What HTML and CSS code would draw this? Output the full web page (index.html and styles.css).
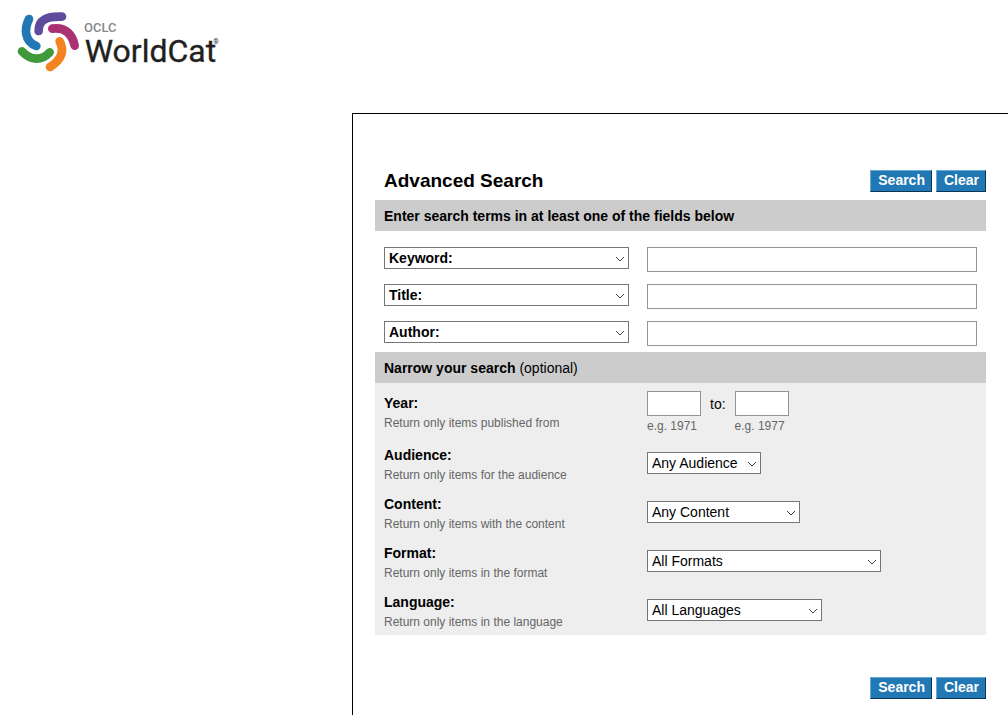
FILE: index.html
```html
<!DOCTYPE html>
<html lang="en">
<head>
<meta charset="utf-8">
<meta name="viewport" content="width=device-width, initial-scale=1">
<title>WorldCat Advanced Search</title>
<link rel="stylesheet" href="styles.css">
</head>
<body>
<header class="site-header">
  <a href="#" class="logo" aria-label="OCLC WorldCat">
    <svg width="207" height="63" viewBox="18 15 621 189" aria-hidden="true">
      <g fill="none" stroke-width="26" stroke-linecap="round">
        <path stroke="#2178b5" d="M57 42C43 70 42 109 79 123"/>
        <path stroke="#5f4b9b" d="M86 78C85 45 110 33 156 35"/>
        <path stroke="#ab3175" d="M127 71C162 67 185 82 194 122"/>
        <path stroke="#f58220" d="M149 109C163 135 158 162 120 186"/>
        <path stroke="#409a3c" d="M36 139C62 167 95 168 119 142"/>
      </g>
      <text class="logo-owner" x="222" y="82">OCLC</text>
      <text class="logo-name" x="224" y="170">WorldCat</text>
      <text class="logo-mark" x="610" y="117">®</text>
    </svg>
  </a>
</header>
<main class="content">
  <form class="search-form">
    <div class="form-head">
      <h1 class="title">Advanced Search</h1>
      <div class="actions">
        <button type="submit" class="btn">Search</button>
        <button type="reset" class="btn">Clear</button>
      </div>
    </div>
    <h2 class="bar">Enter search terms in at least one of the fields below</h2>
    <div class="terms">
      <select class="select select-index" aria-label="First index"><option>Keyword:</option><option>Title:</option><option>Author:</option></select>
      <input class="text-input" type="text" aria-label="First search term">
      <select class="select select-index" aria-label="Second index"><option>Title:</option><option>Keyword:</option><option>Author:</option></select>
      <input class="text-input" type="text" aria-label="Second search term">
      <select class="select select-index" aria-label="Third index"><option>Author:</option><option>Keyword:</option><option>Title:</option></select>
      <input class="text-input" type="text" aria-label="Third search term">
    </div>
    <h2 class="bar">Narrow your search <span class="optional">(optional)</span></h2>
    <div class="limits">
      <div class="limit limit-year">
        <div class="limit-label">
          <label for="year-from">Year:</label>
          <p class="hint">Return only items published from</p>
        </div>
        <div class="years">
          <div class="year">
            <input class="text-input" id="year-from" type="text">
            <span class="hint">e.g. 1971</span>
          </div>
          <label class="to" for="year-to">to:</label>
          <div class="year">
            <input class="text-input" id="year-to" type="text">
            <span class="hint">e.g. 1977</span>
          </div>
        </div>
      </div>
      <div class="limit">
        <div class="limit-label">
          <label for="audience">Audience:</label>
          <p class="hint">Return only items for the audience</p>
        </div>
        <select class="select select-audience" id="audience"><option>Any Audience</option></select>
      </div>
      <div class="limit">
        <div class="limit-label">
          <label for="content">Content:</label>
          <p class="hint">Return only items with the content</p>
        </div>
        <select class="select select-content" id="content"><option>Any Content</option></select>
      </div>
      <div class="limit">
        <div class="limit-label">
          <label for="format">Format:</label>
          <p class="hint">Return only items in the format</p>
        </div>
        <select class="select select-format" id="format"><option>All Formats</option></select>
      </div>
      <div class="limit">
        <div class="limit-label">
          <label for="language">Language:</label>
          <p class="hint">Return only items in the language</p>
        </div>
        <select class="select select-language" id="language"><option>All Languages</option></select>
      </div>
    </div>
    <div class="form-foot">
      <div class="actions">
        <button type="submit" class="btn">Search</button>
        <button type="reset" class="btn">Clear</button>
      </div>
    </div>
  </form>
</main>
</body>
</html>
```
FILE: styles.css
```css
* {
  box-sizing: border-box;
}

body {
  display: flex;
  flex-direction: column;
  min-height: 100vh;
  margin: 0;
  background: #fff;
  color: #000;
  font: 14px/20px "Liberation Sans", Arial, sans-serif;
}

h1,
h2,
p {
  margin: 0;
}

.site-header {
  padding: 10px 16px 40px;
}

.logo,
.logo svg {
  display: block;
}

.logo {
  width: max-content;
}

.logo text {
  font-family: Roboto, "Open Sans", sans-serif;
}

.logo-owner {
  fill: #85878a;
  font-size: 39px;
  font-weight: 500;
}

.logo-name {
  fill: #231f20;
  stroke: #231f20;
  stroke-width: 1;
  font-size: 96px;
}

.logo-mark {
  fill: #231f20;
  font-size: 21px;
}

.content {
  flex: 1;
  margin-left: 352px;
  padding: 56px 22px 16px;
  border: solid #000;
  border-width: 1px 0 0 1px;
}

.form-head {
  display: flex;
  align-items: center;
  justify-content: space-between;
  margin-bottom: 8px;
  padding-left: 9px;
}

.title {
  font-size: 19px;
  line-height: 22px;
}

.actions {
  display: flex;
  gap: 4px;
}

.btn {
  height: 22px;
  padding: 0 6px 2px 7px;
  border: 1px solid;
  border-color: #6aa9d4 #0b3556 #0b3556 #6aa9d4;
  border-radius: 0;
  background: #2178b5;
  color: #fff;
  font: bold 14px/18px "Liberation Sans", Arial, sans-serif;
}

.bar {
  padding: 6px 9px 5px;
  background: #ccc;
  font-size: 14px;
  line-height: 20px;
}

.optional {
  font-weight: normal;
}

.terms {
  display: grid;
  grid-template-columns: 245px 1fr;
  gap: 12px 18px;
  padding: 16px 9px 6px;
}

.text-input {
  width: 100%;
  height: 25px;
  padding: 0 4px;
  border: 1px solid #949494;
  border-radius: 0;
  background: #fff;
  font: inherit;
}

.select {
  height: 22px;
  padding: 0 20px 0 4px;
  appearance: none;
  border: 1px solid #767676;
  border-radius: 0;
  background: #fff url("data:image/svg+xml,%3Csvg xmlns='http://www.w3.org/2000/svg' width='10' height='6'%3E%3Cpath d='M1 1l4 4 4-4' fill='none' stroke='%23444'/%3E%3C/svg%3E") no-repeat right 3px top 8px;
  color: #000;
  font: 14px/20px "Liberation Sans", Arial, sans-serif;
}

.select-index {
  font-weight: bold;
}

.limits {
  display: grid;
  gap: 9px;
  padding: 8px 9px 3px;
  background: #eee;
}

.limit {
  display: grid;
  grid-template-columns: 245px 1fr;
  column-gap: 18px;
}

.limit > .select {
  margin-top: 7px;
}

.limit-label > label {
  font-weight: bold;
}

.limit-year .limit-label {
  padding-top: 2px;
}

.hint {
  color: #666;
  font-size: 12px;
}

.years {
  display: flex;
  gap: 9px;
}

.year {
  display: flex;
  flex-direction: column;
  width: 54px;
}

.to {
  padding-top: 3px;
}

.select-audience {
  width: 114px;
}

.select-content {
  width: 153px;
}

.select-format {
  width: 234px;
}

.select-language {
  width: 175px;
}

.form-foot {
  display: flex;
  justify-content: flex-end;
  margin-top: 42px;
}
```
